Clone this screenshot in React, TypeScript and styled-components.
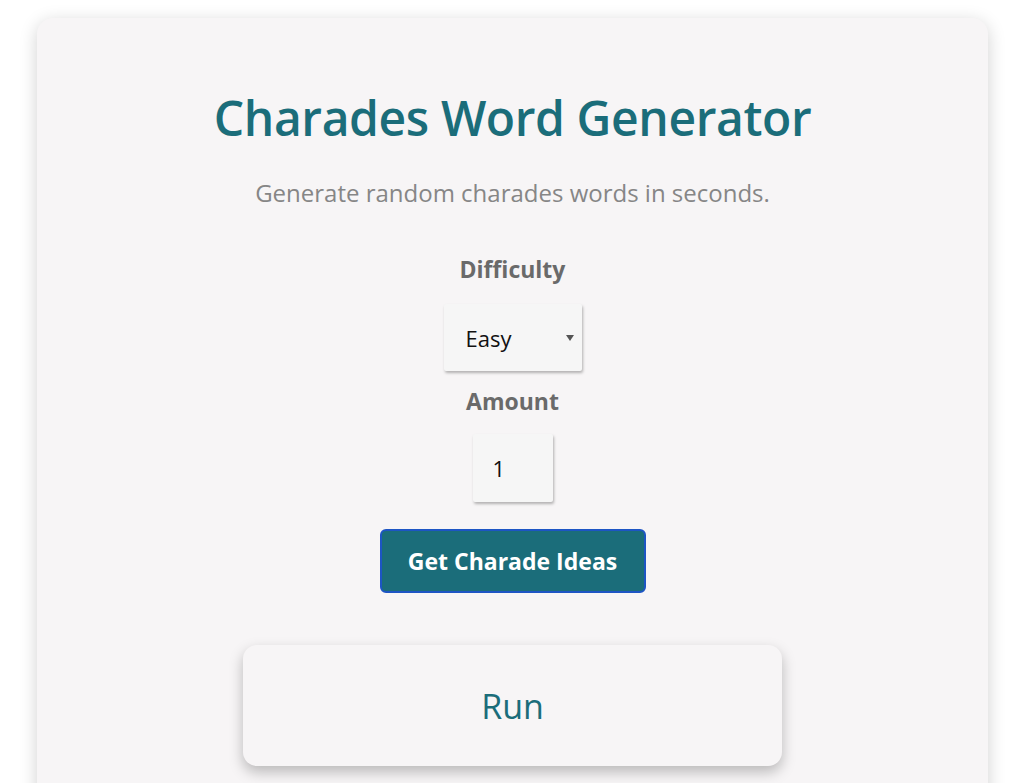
import React, { useState } from "react";
import styled, { createGlobalStyle } from "styled-components";

const GlobalStyle = createGlobalStyle`
  html, body {
    margin: 0;
    padding: 0;
    background: #ffffff;
    font-family: "Open Sans", "Noto Sans", sans-serif;
  }
`;

const Page = styled.div`
  height: 783px;
  overflow: hidden;
  padding: 18px 36px 0 37px;
  box-sizing: border-box;
`;

const Card = styled.div`
  background: #f7f5f6;
  border-radius: 16px;
  box-shadow: 0 4px 18px rgba(0, 0, 0, 0.18);
  min-height: 820px;
  display: flex;
  flex-direction: column;
  align-items: center;
  padding-top: 69px;
`;

const Title = styled.h1`
  margin: 0;
  font-size: 48px;
  font-weight: 600;
  color: #1b6d7a;
  letter-spacing: -0.4px;
  line-height: 62px;
`;

const Subtitle = styled.p`
  margin: 28px 0 0;
  font-size: 24px;
  color: #868686;
  line-height: 32px;
`;

const Label = styled.label`
  display: block;
  margin-top: 44px;
  font-size: 23px;
  font-weight: 700;
  color: #6a6a6a;
  line-height: 32px;
`;

const SelectBox = styled.div`
  position: relative;
  width: 138px;
  height: 67px;
  margin-top: 19px;
  background: #f6f6f6;
  box-shadow: 1px 2px 3px rgba(0, 0, 0, 0.28);
  border-radius: 2px;
`;

const Select = styled.select`
  appearance: none;
  width: 100%;
  height: 100%;
  border: none;
  background: transparent;
  padding: 0 0 0 22px;
  font-family: "Open Sans", sans-serif;
  font-size: 22px;
  color: #111;
  outline: none;
`;

const Caret = styled.span`
  position: absolute;
  right: 8px;
  top: 31px;
  width: 0;
  height: 0;
  border-left: 4px solid transparent;
  border-right: 4px solid transparent;
  border-top: 6px solid #555;
  pointer-events: none;
`;

const AmountLabel = styled(Label)`
  margin-top: 14px;
`;

const NumberInput = styled.input`
  width: 80px;
  height: 68px;
  margin-top: 17px;
  box-sizing: border-box;
  border: none;
  border-radius: 2px;
  background: #f6f6f6;
  box-shadow: 1px 2px 3px rgba(0, 0, 0, 0.28);
  padding: 0 0 0 20px;
  font-family: "Open Sans", sans-serif;
  font-size: 22px;
  color: #111;
  outline: none;
`;

const GenerateButton = styled.button`
  margin-top: 27px;
  width: 266px;
  height: 64px;
  border: 2px solid #1d55c4;
  border-radius: 6px;
  background: #1b6d7a;
  color: #ffffff;
  font-family: "Open Sans", sans-serif;
  font-size: 23px;
  font-weight: 700;
  cursor: pointer;
`;

const RunPanel = styled.div`
  margin-top: 52px;
  width: 539px;
  height: 121px;
  border-radius: 14px;
  background: #f7f5f6;
  box-shadow: 0 6px 14px rgba(0, 0, 0, 0.25);
  display: flex;
  align-items: center;
  justify-content: center;
  font-size: 34px;
  font-weight: 500;
  color: #1b6d7a;
`;

export default function App() {
  const [difficulty, setDifficulty] = useState("easy");
  const [amount, setAmount] = useState("1");

  return (
    <>
      <GlobalStyle />
      <Page>
        <Card>
          <Title>Charades Word Generator</Title>
          <Subtitle>Generate random charades words in seconds.</Subtitle>
          <Label>Difficulty</Label>
          <SelectBox>
            <Select value={difficulty} onChange={(e) => setDifficulty(e.target.value)}>
              <option value="easy">Easy</option>
              <option value="medium">Medium</option>
              <option value="hard">Hard</option>
            </Select>
            <Caret />
          </SelectBox>
          <AmountLabel>Amount</AmountLabel>
          <NumberInput
            type="text"
            value={amount}
            onChange={(e) => setAmount(e.target.value)}
          />
          <GenerateButton>Get Charade Ideas</GenerateButton>
          <RunPanel>Run</RunPanel>
        </Card>
      </Page>
    </>
  );
}
